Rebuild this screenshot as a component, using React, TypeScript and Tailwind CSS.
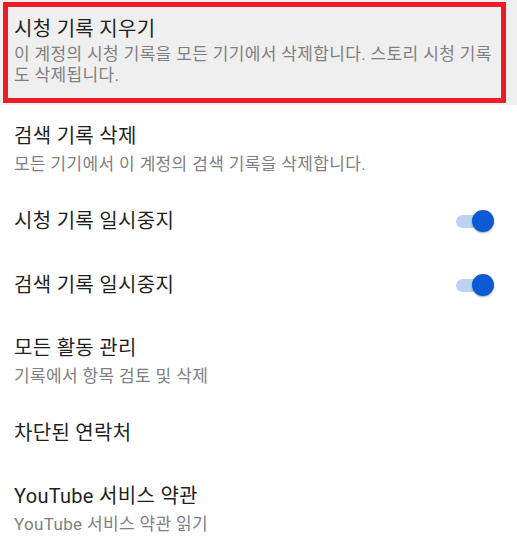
import React from "react";

const font = { fontFamily: '"Roboto", "Noto Sans CJK KR", sans-serif' };

function Toggle() {
  return (
    <div className="relative flex h-[24px] w-[38px] items-center">
      <div className="h-[13px] w-[34px] rounded-full bg-[#bcd2f5]" />
      <div className="absolute right-0 top-[1px] h-[22px] w-[22px] rounded-full bg-[#0b5ad4] shadow-[0_1px_2px_rgba(0,0,0,0.35)]" />
    </div>
  );
}

function TwoLineRow({ title, sub }: { title: string; sub: string }) {
  return (
    <div className="flex flex-col px-[14px] pb-[14px] pt-[17px]">
      <div className="text-[20px] leading-[28px] tracking-[0.3px] text-[#1f1f1f]">{title}</div>
      <div className="mt-[3px] text-[17px] leading-[22px] tracking-[0.35px] text-[#808080]">{sub}</div>
    </div>
  );
}

function SingleRow({ title, toggle }: { title: string; toggle?: boolean }) {
  return (
    <div className="flex h-[64px] items-center justify-between pl-[14px] pr-[23px]">
      <div className="text-[20px] leading-[28px] tracking-[0.3px] text-[#1f1f1f]">{title}</div>
      {toggle && <Toggle />}
    </div>
  );
}

export default function App() {
  return (
    <div className="h-[552px] w-[517px] overflow-hidden bg-white" style={font}>
      <div className="relative flex flex-col bg-[#efefef] px-[14px] pb-[20px] pt-[15px]">
        <div className="text-[20px] leading-[28px] tracking-[0.3px] text-[#1f1f1f]">시청 기록 지우기</div>
        <div className="mt-[1px] pr-[10px] text-[17px] leading-[20.5px] tracking-[0.35px] text-[#808080]">
          이 계정의 시청 기록을 모든 기기에서 삭제합니다. 스토리 시청 기록도 삭제됩니다.
        </div>
        <div className="pointer-events-none absolute bottom-[2px] left-[3px] right-[11px] top-[2px] border-[5px] border-[#ed1c24]" />
      </div>
      <TwoLineRow title="검색 기록 삭제" sub="모든 기기에서 이 계정의 검색 기록을 삭제합니다." />
      <SingleRow title="시청 기록 일시중지" toggle />
      <SingleRow title="검색 기록 일시중지" toggle />
      <TwoLineRow title="모든 활동 관리" sub="기록에서 항목 검토 및 삭제" />
      <SingleRow title="차단된 연락처" />
      <TwoLineRow title="YouTube 서비스 약관" sub="YouTube 서비스 약관 읽기" />
    </div>
  );
}
